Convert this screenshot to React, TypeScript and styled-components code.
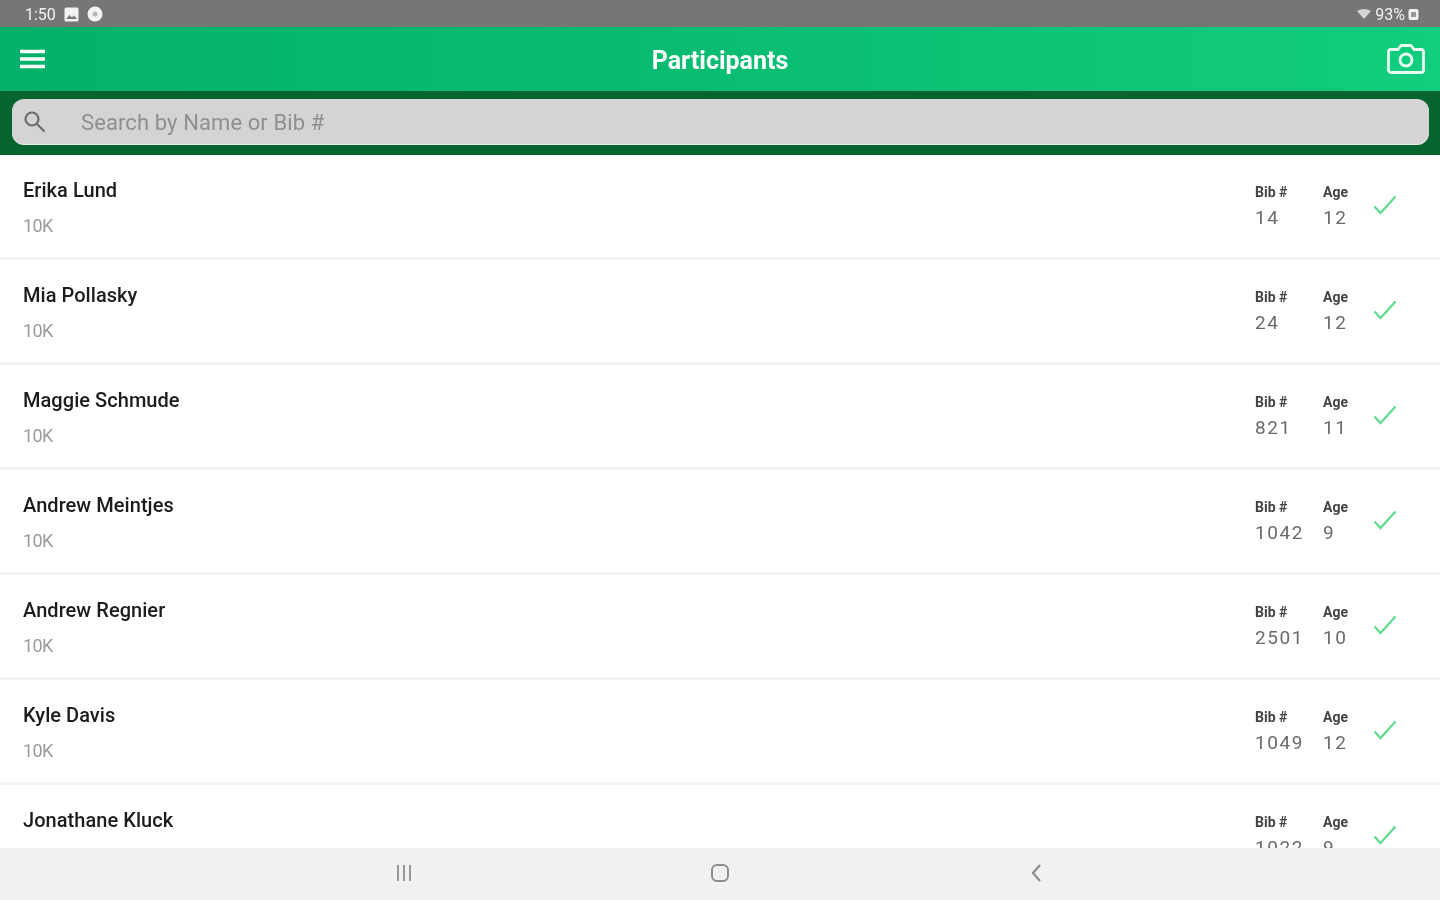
import React from "react";
import styled, { createGlobalStyle } from "styled-components";

const Global = createGlobalStyle`
  html, body { margin: 0; padding: 0; background: #fff; }
  body { font-family: Roboto, "Liberation Sans", sans-serif; }
`;

const Page = styled.div`
  width: 1440px; height: 900px; display: flex; flex-direction: column; overflow: hidden;
  filter: blur(0.7px);
`;
const StatusBar = styled.div`
  height: 27px; flex: none; background: #767676; color: #f2f2f2; display: flex;
  align-items: center; justify-content: space-between; padding: 1px 21px 0 25px; font-size: 16px; box-sizing: border-box;
`;
const StatusGroup = styled.div`display: flex; align-items: center; gap: 8px;`;
const TightGroup = styled(StatusGroup)`gap: 3px;`;
const Header = styled.header`
  height: 64px; flex: none; display: flex; align-items: center; justify-content: space-between;
  padding: 0 15px 0 20px; background: linear-gradient(90deg, #05b16a 0%, #08bb70 45%, #12cd7d 100%);
  position: relative; box-sizing: border-box;
`;
const Title = styled.h1`
  position: absolute; left: 0; right: 0; top: 17px; margin: 0; text-align: center;
  color: #fff; font-size: 25px; line-height: 34px; font-weight: 700;
`;
const IconSlot = styled.div`display: flex; align-items: center;`;
const SearchBand = styled.div`
  height: 64px; flex: none; box-sizing: border-box; padding: 8px 11px 11px 12px;
  background: #06642f;
`;
const SearchBox = styled.div`
  height: 45px; background: #d4d4d4; border-radius: 12px; display: flex; align-items: center;
  padding-left: 11px; gap: 35px; box-shadow: 0 1px 0 #e8efe9;
`;
const Placeholder = styled.span`
  color: #8f8f8f; font-size: 22px; letter-spacing: 0.1px; padding-top: 2px;
`;
const List = styled.main`flex: 1; min-height: 0; overflow: hidden; background: #fff;`;
const Row = styled.article`
  height: 105px; box-sizing: border-box; border-bottom: 3px solid #f3f3f3;
  display: flex; justify-content: space-between; padding: 22px 0 0 23px;
`;
const Person = styled.div`display: flex; flex-direction: column; gap: 11px;`;
const Name = styled.div`
  color: #1c1c1c; font-size: 20px; line-height: 26px; font-weight: 500; letter-spacing: 0.05px;
`;
const Race = styled.div`color: #9b9b9b; font-size: 18px; line-height: 24px; letter-spacing: -0.6px;`;
const Stats = styled.div`display: flex; align-items: flex-start;`;
const Stat = styled.div<{ $width: number }>`
  width: ${(p) => p.$width}px; display: flex; flex-direction: column; padding-top: 7px;
`;
const StatLabel = styled.div`color: #444; font-size: 14px; line-height: 17px; font-weight: 700;`;
const StatValue = styled.div`color: #6a6a6a; font-size: 19px; line-height: 26px; letter-spacing: 1.6px; margin-top: 4px;`;
const Check = styled.div`width: 67px; padding-top: 18px; color: #5fdc8e;`;
const NavBar = styled.nav`
  height: 52px; flex: none; background: #f1f1f1; display: flex; align-items: center;
  justify-content: center; padding: 0 0 2px; box-sizing: border-box;
`;
const NavButtons = styled.div`
  width: 672px; display: flex; justify-content: space-between; align-items: center;
`;
const NavIcon = styled.div`width: 40px; display: flex; align-items: center; justify-content: center; color: #8d8d8d;`;

const people = [
  ["Erika Lund", "14", "12"],
  ["Mia Pollasky", "24", "12"],
  ["Maggie Schmude", "821", "11"],
  ["Andrew Meintjes", "1042", "9"],
  ["Andrew Regnier", "2501", "10"],
  ["Kyle Davis", "1049", "12"],
  ["Jonathane Kluck", "1022", "9"],
];

export default function App() {
  return (
    <Page>
      <Global />
      <StatusBar>
        <StatusGroup>
          <span>1:50</span>
          <svg width="15" height="15" viewBox="0 0 15 15">
            <rect x="0.5" y="0.5" width="14" height="14" rx="1.5" fill="#f2f2f2" />
            <path d="M2 12l3.5-4 2.5 2.5 2-2 3 3.5z" fill="#767676" />
          </svg>
          <svg width="16" height="16" viewBox="0 0 16 16">
            <circle cx="8" cy="8" r="7.5" fill="#f4f4f4" />
            <circle cx="8" cy="8" r="2.5" fill="#b5b5b5" />
          </svg>
        </StatusGroup>
        <TightGroup>
          <svg width="16" height="12" viewBox="0 0 16 12">
            <path d="M1 3q7-4 14 0L8 11z" fill="#d4d4d4" />
          </svg>
          <span>93%</span>
          <svg width="11" height="13" viewBox="0 0 11 13">
            <rect x="0.5" y="1" width="10" height="11" rx="2" fill="#f2f2f2" />
            <rect x="3" y="4" width="5" height="5" fill="#999" />
          </svg>
        </TightGroup>
      </StatusBar>
      <Header>
        <IconSlot>
          <svg width="26" height="20" viewBox="0 0 26 20">
            <path d="M0 2.5h25M0 10h25M0 17.5h25" stroke="#fff" strokeWidth="3.4" />
          </svg>
        </IconSlot>
        <Title>Participants</Title>
        <IconSlot>
          <svg width="38" height="32" viewBox="0 0 38 32" fill="none" stroke="#eafff4" strokeWidth="2.8">
            <path d="M4 6.5h7l3-4h10l3 4h7a2.5 2.5 0 0 1 2.5 2.5v18a2.5 2.5 0 0 1-2.5 2.5H4A2.5 2.5 0 0 1 1.500 27V9A2.500 2.500 0 0 1 4 6.500z" strokeLinejoin="round" />
            <circle cx="19" cy="17" r="6" />
          </svg>
        </IconSlot>
      </Header>
      <SearchBand>
        <SearchBox>
          <svg width="23" height="23" viewBox="0 0 23 23" fill="none" stroke="#6e6e6e" strokeWidth="2.200">
            <circle cx="9" cy="9" r="6.500" />
            <path d="M14 14l7 7" strokeLinecap="round" />
          </svg>
          <Placeholder>Search by Name or Bib #</Placeholder>
        </SearchBox>
      </SearchBand>
      <List>
        {people.map(([name, bib, age]) => (
          <Row key={name}>
            <Person>
              <Name>{name}</Name>
              <Race>10K</Race>
            </Person>
            <Stats>
              <Stat $width={68}>
                <StatLabel>Bib #</StatLabel>
                <StatValue>{bib}</StatValue>
              </Stat>
              <Stat $width={50}>
                <StatLabel>Age</StatLabel>
                <StatValue>{age}</StatValue>
              </Stat>
              <Check>
                <svg width="24" height="20" viewBox="0 0 24 20" fill="none" stroke="currentColor" strokeWidth="2.200">
                  <path d="M1.500 11.500L7.500 18L22.500 1.500" />
                </svg>
              </Check>
            </Stats>
          </Row>
        ))}
      </List>
      <NavBar>
        <NavButtons>
          <NavIcon>
            <svg width="18" height="16" viewBox="0 0 18 16" fill="none" stroke="currentColor" strokeWidth="1.800">
              <path d="M3 0v16M9 0v16M15 0v16" />
            </svg>
          </NavIcon>
          <NavIcon>
            <svg width="20" height="20" viewBox="0 0 20 20" fill="none" stroke="currentColor" strokeWidth="2">
              <rect x="2" y="2" width="16" height="16" rx="5" />
            </svg>
          </NavIcon>
          <NavIcon>
            <svg width="12" height="18" viewBox="0 0 12 18" fill="none" stroke="currentColor" strokeWidth="2.200">
              <path d="M10 1L3 9l7 8" />
            </svg>
          </NavIcon>
        </NavButtons>
      </NavBar>
    </Page>
  );
}
